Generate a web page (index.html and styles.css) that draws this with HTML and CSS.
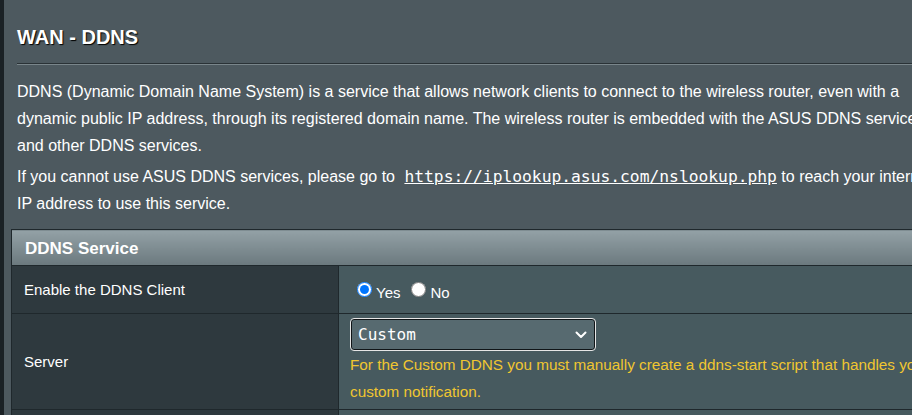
FILE: index.html
```html
<!DOCTYPE html>
<html>
<head>
<meta charset="utf-8">
<link rel="stylesheet" href="styles.css">
</head>
<body>
<div class="page">
  <div class="side"></div>
  <main class="content">
    <div class="head">
      <h1 class="title">WAN - DDNS</h1>
      <div class="rule"></div>
      <p class="desc">DDNS (Dynamic Domain Name System) is a service that allows network clients to connect to the wireless router, even with a<br>dynamic public IP address, through its registered domain name. The wireless router is embedded with the ASUS DDNS service<br>and other DDNS services.</p>
      <p class="desc second">If you cannot use ASUS DDNS services, please go to <a class="link" href="#">https://iplookup.asus.com/nslookup.php</a> to reach your internet<br>IP address to use this service.</p>
    </div>
    <table class="form">
      <colgroup>
        <col class="col-label">
        <col class="col-value">
      </colgroup>
      <thead>
        <tr><th colspan="2" class="caption">DDNS Service</th></tr>
      </thead>
      <tbody>
        <tr class="row1">
          <th>Enable the DDNS Client</th>
          <td class="radios"><input type="radio" name="en" checked><span class="opt">Yes</span><input type="radio" name="en"><span class="opt">No</span></td>
        </tr>
        <tr class="row2">
          <th>Server</th>
          <td class="server">
            <div class="selwrap">
              <select class="sel"><option>Custom</option></select>
              <svg class="chev" width="12" height="8" viewBox="0 0 12 8"><path d="M1.5 1.5 L6 6 L10.5 1.5" fill="none" stroke="#fff" stroke-width="2" stroke-linecap="round" stroke-linejoin="round"/></svg>
            </div>
            <div class="hint">For the Custom DDNS you must manually create a ddns-start script that handles your<br>custom notification.</div>
          </td>
        </tr>
        <tr class="row3">
          <th>Host Name</th>
          <td></td>
        </tr>
      </tbody>
    </table>
  </main>
</div>
</body>
</html>
```
FILE: styles.css
```css
html, body {
  margin: 0;
  padding: 0;
  background: #4d595f;
  overflow: hidden;
}
body {
  font-family: "Liberation Sans", Arial, sans-serif;
  color: #ffffff;
  width: 912px;
  height: 415px;
}
.page {
  display: flex;
  width: 1200px;
  height: 415px;
}
.side {
  width: 4px;
  flex: none;
  background: #1a2125;
}
.content {
  flex: none;
  width: 1196px;
  padding-left: 7px;
}
.head {
  padding-left: 6px;
}
.title {
  margin: 0;
  padding-top: 26px;
  font-size: 20px;
  line-height: 23px;
  font-weight: bold;
  color: #ffffff;
  text-shadow: 1px 1px 1px #000;
}
.rule {
  margin-top: 14px;
  height: 1px;
  background: #2a3236;
  border-bottom: 1px solid #7a868b;
}
.desc {
  margin: 13px 0 0;
  font-size: 16px;
  line-height: 27px;
  white-space: nowrap;
  color: #ffffff;
}
.desc.second {
  margin-top: 4px;
}
.link {
  font-family: "DejaVu Sans Mono", "Liberation Mono", monospace;
  font-size: 16.3px;
  margin-left: 5px;
  color: #ffffff;
  text-decoration: underline;
}
.form {
  margin-top: 12px;
  border-collapse: collapse;
  width: 1000px;
  table-layout: fixed;
}
.col-label {
  width: 327px;
}
.form th, .form td {
  border: 1px solid #1f282c;
  padding: 0;
}
.form th {
  text-align: left;
  font-weight: normal;
  font-size: 15px;
  padding-left: 12px;
  background: #2e393e;
  color: #ffffff;
}
.form td {
  background: #475a5f;
}
.form th.caption {
  height: 33px;
  padding-top: 2px;
  padding-left: 13px;
  font-size: 17px;
  font-weight: bold;
  background: linear-gradient(#93a1a6, #6b797e);
  border-top: 1px solid #1f282c;
}
.row1 th, .row1 td {
  height: 47px;
}
.radios {
  padding-left: 13px !important;
  font-size: 15px;
}
.radios input {
  width: 15px;
  height: 15px;
  margin: 3px 4px 0 5px;
  vertical-align: 0;
}
.opt {
  margin-right: 6px;
  position: relative;
  top: 1px;
}
.row2 th {
  height: 95px;
}
.form td.server {
  height: 87px;
  padding: 4px 0 4px 11px;
  vertical-align: top;
}
.selwrap {
  position: relative;
  width: 246px;
  height: 33px;
}
.sel {
  display: block;
  appearance: none;
  -webkit-appearance: none;
  width: 246px;
  height: 33px;
  box-sizing: border-box;
  border: 1px solid #e6e6e6;
  box-shadow: inset 0 0 0 1px #101518;
  border-radius: 4px;
  background: #576a70;
  color: #ffffff;
  font-family: "DejaVu Sans Mono", "Liberation Mono", monospace;
  font-size: 16px;
  padding: 0 0 0 7px;
  outline: none;
}
.chev {
  position: absolute;
  right: 9px;
  top: 13px;
}
.hint {
  font-size: 15.3px;
  line-height: 27px;
  color: #f0c630;
  white-space: nowrap;
}
.row3 th, .row3 td {
  height: 40px;
}
```
